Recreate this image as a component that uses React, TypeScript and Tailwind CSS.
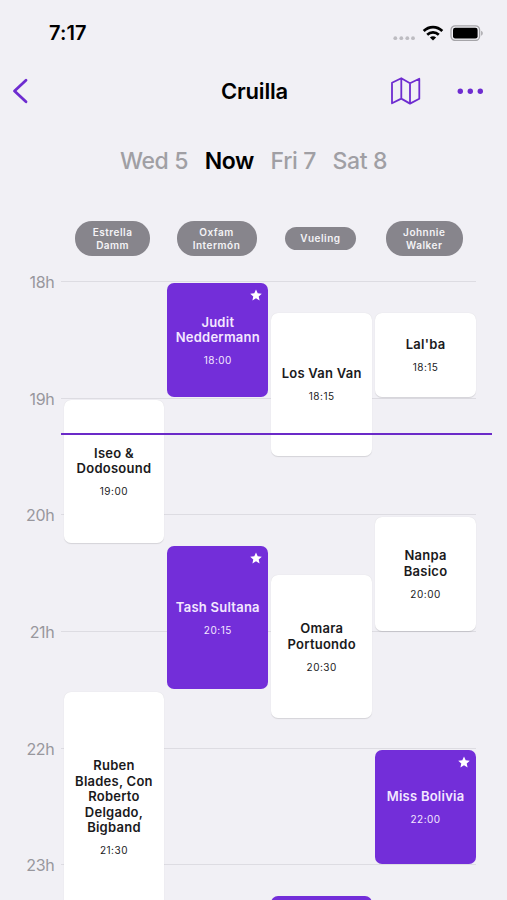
const HOUR_HEIGHT = 116.7;
const FIRST_HOUR = 18;

interface Show {
  artist: string;
  time: string;
  minutes: number;
  starred?: boolean;
}

interface Stage {
  name: string;
  pill: string;
  shows: Show[];
}

const days = ["Wed 5", "Now", "Fri 7", "Sat 8"];
const hours = [18, 19, 20, 21, 22, 23];

const stages: Stage[] = [
  {
    name: "Estrella Damm",
    pill: "w-[75px]",
    shows: [
      { artist: "Iseo & Dodosound", time: "19:00", minutes: 75 },
      { artist: "Ruben Blades, Con Roberto Delgado, Bigband", time: "21:30", minutes: 120 },
    ],
  },
  {
    name: "Oxfam Intermón",
    pill: "w-[80px]",
    shows: [
      { artist: "Judit Neddermann", time: "18:00", minutes: 60, starred: true },
      { artist: "Tash Sultana", time: "20:15", minutes: 75, starred: true },
    ],
  },
  {
    name: "Vueling",
    pill: "w-[71px]",
    shows: [
      { artist: "Los Van Van", time: "18:15", minutes: 75 },
      { artist: "Omara Portuondo", time: "20:30", minutes: 75 },
      { artist: "", time: "23:15", minutes: 75, starred: true },
    ],
  },
  {
    name: "Johnnie Walker",
    pill: "w-[77px]",
    shows: [
      { artist: "Lal'ba", time: "18:15", minutes: 45 },
      { artist: "Nanpa Basico", time: "20:00", minutes: 60 },
      { artist: "Miss Bolivia", time: "22:00", minutes: 60, starred: true },
    ],
  },
];

// minutes since the first hour of the grid
function toMinutes(time: string) {
  const [h, m] = time.split(":").map(Number);
  return (h - FIRST_HOUR) * 60 + m;
}

function StatusBar() {
  return (
    <div className="flex h-[66px] items-center justify-between pl-[49px] pr-[23px]">
      <span className="text-[20px] font-semibold leading-6 tracking-[0.1px]">7:17</span>
      <div className="flex items-center">
        <svg width="22" height="16" viewBox="0 0 22 16" fill="#bdbcc1" className="mr-[7px]">
          <circle cx="2.3" cy="13.2" r="1.9" />
          <circle cx="8.3" cy="13.2" r="1.9" />
          <circle cx="14.3" cy="13.2" r="1.9" />
          <circle cx="20" cy="13.2" r="1.9" />
        </svg>
        <svg width="22" height="16" viewBox="0 0 22 16" fill="none" stroke="#000" strokeWidth="2.7" className="mr-[6px]">
          <path d="M1.7 6C7 0.8 15 0.8 20.3 6" />
          <path d="M5.2 9.7C8.5 6.6 13.5 6.6 16.8 9.7" />
          <path d="M11 15.6 7.9 12.5C9.7 10.9 12.3 10.9 14.1 12.5Z" fill="#000" stroke="none" />
        </svg>
        <svg width="34" height="16" viewBox="0 0 34 16">
          <rect x="1" y="0.8" width="28.6" height="14.6" rx="4.2" fill="none" stroke="#a5a4a8" strokeWidth="1.3" />
          <rect x="3" y="2.8" width="24.6" height="10.6" rx="2.2" fill="#000" />
          <path d="M31.2 5.7C33.2 6.6 33.2 9.8 31.2 10.7Z" fill="#a5a4a8" />
        </svg>
      </div>
    </div>
  );
}

function NavBar() {
  return (
    <div className="grid h-[49px] grid-cols-[1fr_auto_1fr] items-center pl-[12px] pr-[23px]">
      <svg width="18" height="28" viewBox="0 0 18 28" fill="none" stroke="#6e2cd0" strokeWidth="2.8" strokeLinecap="round" strokeLinejoin="round">
        <path d="M14 3.3 2.5 14 14 24.8" />
      </svg>
      <h1 className="ml-[13px] text-[22px] font-semibold leading-7 tracking-[-0.2px]">Cruilla</h1>
      <div className="flex items-center justify-end gap-[36px]">
        <svg width="31" height="30" viewBox="0 0 31 30" fill="none" stroke="#6e2cd0" strokeWidth="1.8" strokeLinejoin="round">
          <path d="M2 6.8 11.3 2.2 20 7.2 29.3 2.8V22.8L20 27.6 11.3 22.6 2 27.3ZM11.3 2.2V22.6M20 7.2V27.6" />
        </svg>
        <svg width="27" height="8" viewBox="0 0 27 8" fill="#6e2cd0">
          <circle cx="3.3" cy="4.2" r="2.7" />
          <circle cx="13.3" cy="4.2" r="2.7" />
          <circle cx="23.3" cy="4.2" r="2.7" />
        </svg>
      </div>
    </div>
  );
}

function DayTabs() {
  return (
    <div className="flex h-[92px] items-center justify-center gap-[16.5px] text-[23px] leading-7 tracking-[-0.35px]">
      {days.map((day) => (
        <span key={day} className={day === "Now" ? "font-semibold text-black" : "font-medium text-[#a09fa4]"}>
          {day}
        </span>
      ))}
    </div>
  );
}

function ShowCard({ show, offset }: { show: Show; offset: number }) {
  const colors = show.starred
    ? "bg-[#732ed9] text-[#f3e8ff]"
    : "bg-white text-[#1a1a1c] shadow-[0_0.5px_1px_rgba(0,0,0,0.12)]";

  return (
    <div
      className={`relative flex shrink-0 flex-col items-center justify-center gap-[8.4px] rounded-[7px] px-[7px] text-center ${colors}`}
      style={{ marginTop: offset, height: (show.minutes / 60) * HOUR_HEIGHT - 2.7 }}
    >
      {show.starred && (
        <svg width="12" height="12" viewBox="0 0 24 24" fill="#fff" className="absolute right-[6px] top-[6px]">
          <path d="M12 0.8 15.4 8.5 23.6 9.3 17.4 14.8 19.2 23 12 18.7 4.8 23 6.6 14.8 0.4 9.3 8.6 8.5Z" />
        </svg>
      )}
      {show.artist && (
        <>
          <div className="text-[13px] font-semibold leading-[15.6px] tracking-[0.25px]">{show.artist}</div>
          <div className="text-[10px] leading-3 tracking-[0.5px]">{show.time}</div>
        </>
      )}
    </div>
  );
}

function StageColumn({ stage }: { stage: Stage }) {
  let cursor = 0;
  return (
    <div className="flex flex-col">
      {stage.shows.map((show) => {
        const top = (toMinutes(show.time) / 60) * HOUR_HEIGHT + 2.4;
        const offset = top - cursor;
        cursor = top + (show.minutes / 60) * HOUR_HEIGHT - 2.7;
        return <ShowCard key={show.time} show={show} offset={offset} />;
      })}
    </div>
  );
}

export default function App() {
  return (
    <div className="flex h-[900px] w-[507px] flex-col overflow-hidden bg-[#f1f0f5] font-['Inter',sans-serif] text-black">
      <StatusBar />
      <NavBar />
      <DayTabs />

      <div className="ml-[62.2px] grid h-[74px] w-[412.5px] shrink-0 grid-cols-4 gap-[3px] pt-[13.5px]">
        {stages.map((stage) => (
          <div key={stage.name} className="flex h-[36px] items-center justify-center">
            <div className={`rounded-[17px] bg-[#87858c] px-[14px] py-[5px] text-center text-[10px] font-semibold leading-[12.5px] tracking-[0.5px] text-[#f4f3f6] ${stage.pill}`}>
              {stage.name}
            </div>
          </div>
        ))}
      </div>

      <div className="relative grid min-h-0 flex-1">
        <div className="col-start-1 row-start-1">
          {hours.map((hour) => (
            <div key={hour} className="flex items-start" style={{ height: HOUR_HEIGHT }}>
              <span className="-mt-[9px] w-[54.5px] text-right text-[16px] leading-5 tracking-[-0.3px] text-[#98979d]">{hour}h</span>
              <div className="ml-[6px] h-px w-[415.5px] bg-[#dddce2]" />
            </div>
          ))}
        </div>
        <div className="relative col-start-1 row-start-1 ml-[63.5px] grid w-[412.5px] grid-cols-4 gap-[3px]">
          {stages.map((stage) => (
            <StageColumn key={stage.name} stage={stage} />
          ))}
        </div>
        {/* current time */}
        <div className="absolute left-[60.5px] top-[152px] h-[2px] w-[431px] bg-[#6b2ac8]" />
      </div>
    </div>
  );
}
